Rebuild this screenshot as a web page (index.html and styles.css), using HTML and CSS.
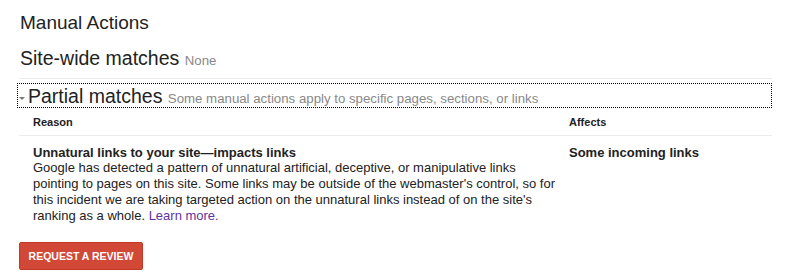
FILE: index.html
```html
<!DOCTYPE html>
<html lang="en">
<head>
<meta charset="utf-8">
<title>Manual Actions</title>
<link rel="stylesheet" href="styles.css">
</head>
<body>
<div class="page">
  <h1 class="title">Manual Actions</h1>
  <h2 class="section">Site-wide matches <span class="note">None</span></h2>
  <div class="divider"></div>
  <h2 class="section toggle"><span class="arrow"></span>Partial matches <span class="note">Some manual actions apply to specific pages, sections, or links</span></h2>
  <table class="actions">
    <thead>
      <tr><th class="col-reason">Reason</th><th class="col-affects">Affects</th></tr>
    </thead>
    <tbody>
      <tr>
        <td class="col-reason">
          <div class="reason-title">Unnatural links to your site—impacts links</div>
          <div class="reason-desc">Google has detected a pattern of unnatural artificial, deceptive, or manipulative links pointing to pages on this site. Some links may be outside of the webmaster's control, so for this incident we are taking targeted action on the unnatural links instead of on the site's ranking as a whole. <a class="link" href="#">Learn more.</a></div>
        </td>
        <td class="col-affects"><div class="affects">Some incoming links</div></td>
      </tr>
    </tbody>
  </table>
  <button class="review-btn" type="button">Request a review</button>
</div>
</body>
</html>
```

FILE: styles.css
```css
html, body {
  margin: 0;
  padding: 0;
  background: #fff;
}
body {
  font-family: "Liberation Sans", Arial, sans-serif;
  color: #222;
}
.page {
  padding: 12px 0 0 20px;
  width: 752px;
}
.title {
  margin: 0;
  font-size: 19px;
  font-weight: normal;
  line-height: 22px;
  color: #222;
}
.section {
  margin: 13px 0 0;
  font-size: 19.5px;
  font-weight: normal;
  line-height: 22px;
  color: #222;
}
.note {
  font-size: 13.25px;
  color: #888;
}
.divider {
  height: 1px;
  background: #ebebeb;
  margin: 6px 0 0 -1px;
}
.toggle {
  margin: 4px 0 0 -3px;
  padding: 1px 0 0 1px;
  height: 22px;
  border: 1px dotted #000;
  display: flex;
  align-items: baseline;
  white-space: pre;
}
.arrow {
  display: inline-block;
  width: 0;
  height: 0;
  border-left: 3px solid transparent;
  border-right: 3px solid transparent;
  border-top: 3px solid #777;
  margin: 0 3px 0 0;
  align-self: center;
  position: relative;
  top: 2px;
}
.actions {
  border-collapse: collapse;
  width: 753px;
  margin-left: -1px;
  table-layout: fixed;
}
.actions th {
  text-align: left;
  font-size: 11px;
  font-weight: bold;
  color: #222;
  line-height: 14px;
  padding: 7px 0 6px 14px;
  border-bottom: 1px solid #ebebeb;
}
.actions td {
  vertical-align: top;
  padding: 9px 0 0 14px;
}
.actions th.col-affects,
.actions td.col-affects {
  padding-left: 6px;
}
.col-reason {
  width: 530px;
}
.reason-title {
  font-size: 13px;
  font-weight: bold;
  line-height: 15px;
}
.reason-desc {
  font-size: 13px;
  line-height: 16px;
}
.affects {
  font-size: 13px;
  font-weight: bold;
  line-height: 15px;
}
.link {
  color: #6133a0;
  text-decoration: none;
}
.review-btn {
  display: block;
  margin: 18px 0 0 -1px;
  width: 124px;
  height: 28px;
  padding: 0;
  background: #d14836;
  border: 1px solid #c53727;
  border-radius: 2px;
  color: #fff;
  font-family: "Liberation Sans", Arial, sans-serif;
  font-size: 10.5px;
  font-weight: bold;
  text-transform: uppercase;
  letter-spacing: 0;
}
```
